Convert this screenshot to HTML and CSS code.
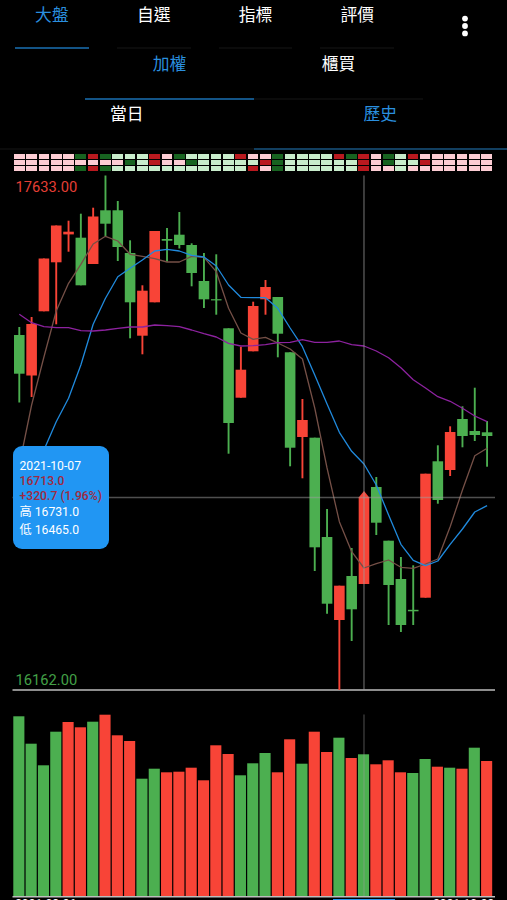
FILE: index.html
```html
<!DOCTYPE html>
<html lang="zh-TW">
<head>
    <meta charset="UTF-8">
    <title>大盤</title>
    <link rel="stylesheet" href="styles.css">
</head>
<body>
    <div class="app">
        <header class="topbar">
            <nav class="tabs tabs-main">
                <a class="tab active">大盤</a>
                <a class="tab">自選</a>
                <a class="tab">指標</a>
                <a class="tab">評價</a>
            </nav>
            <svg class="more" width="8" height="24" viewBox="0 0 8 24">
                <circle cx="4" cy="4.6" r="2.9"/>
                <circle cx="4" cy="12" r="2.9"/>
                <circle cx="4" cy="19.4" r="2.9"/>
            </svg>
        </header>
        <nav class="tabs tabs-market">
            <a class="tab active">加權</a>
            <a class="tab">櫃買</a>
        </nav>
        <nav class="tabs tabs-range">
            <a class="tab">當日</a>
            <a class="tab active">歷史</a>
        </nav>

        <div class="signals" id="signals"></div>

        <div class="price">
            <svg class="chart" id="price" width="507" height="520" viewBox="0 171 507 520"></svg>
            <div class="tooltip">
                <div>2021-10-07</div>
                <div class="up">16713.0</div>
                <div class="up">+320.7 (1.96%)</div>
                <div class="range">高 16731.0</div>
                <div class="range">低 16465.0</div>
            </div>
        </div>
        <svg class="chart" id="volume" width="507" height="207" viewBox="0 691 507 207"></svg>
        <footer class="dates">
            <span>2021-08-26</span>
            <div class="handle"></div>
            <span>2021-10-22</span>
        </footer>
    </div>
    <script src="chart.js"></script>
</body>
</html>
```
FILE: styles.css
```css
body {
    margin: 0;
    background: #000;
    overflow: hidden;
    font-family: Roboto, "Noto Sans CJK TC", sans-serif;
    color: #fff;
}

.app {
    width: 507px;
    height: 900px;
    overflow: hidden;
    display: flex;
    flex-direction: column;
}

/* tabs */
.topbar {
    display: flex;
    height: 49px;
    flex-shrink: 0;
}

.tabs {
    display: flex;
    flex-shrink: 0;
}

.tab {
    box-sizing: border-box;
    text-align: center;
    font-size: 16.8px;
    line-height: 30px;
    border-bottom: 2px solid #0b0b0b;
}

.tab.active {
    color: #2a8fdf;
    border-bottom-color: #135486;
}

.tabs-main {
    gap: 28px;
    padding-left: 15px;
    width: 442px;
}

.tabs-main .tab {
    width: 73.8px;
    height: 49px;
}

.more {
    margin: 14px 0 0 4px;
    fill: #fff;
}

.tabs-market {
    height: 51px;
    padding: 0 84px 0 85px;
}

.tabs-market .tab,
.tabs-range .tab {
    flex: 1;
}

.tabs-range {
    height: 50px;
}

.tabs-range .tab {
    line-height: 29px;
}

.tabs-range .tab.active {
    border-bottom-color: #123f60;
}

/* signal strip */
.signals {
    display: grid;
    grid-template-columns: repeat(39, 10.7px);
    grid-template-rows: repeat(3, 5px);
    grid-auto-flow: column;
    gap: 1px 1.61px;
    padding: 3.5px 0 0 14px;
    height: 17.5px;
    flex-shrink: 0;
}

.P { background: #fcccd3; }
.L { background: #c8eccb; }
.R { background: #b9191f; }
.G { background: #176320; }

/* charts */
.chart {
    display: block;
    flex-shrink: 0;
}

.price {
    position: relative;
    flex-shrink: 0;
}

.bull {
    fill: #f84437;
    stroke: #f84437;
}

.bear {
    fill: #4caf50;
    stroke: #4caf50;
}

.body {
    stroke: none;
}

.wick {
    stroke-width: 1.9;
}

.ma {
    fill: none;
    stroke-width: 1.3;
    stroke-linejoin: round;
}

.ma5 { stroke: #755047; }
.ma10 { stroke: #208add; }
.ma20 { stroke: #8d229f; }

.axis {
    stroke: #bdbdbd;
    stroke-width: 1.5;
}

.cross {
    stroke: #9e9e9e;
    stroke-opacity: 0.5;
    stroke-width: 1.5;
}

.volume-cross {
    stroke: #9e9e9e;
    stroke-opacity: 0.3;
    stroke-width: 1.7;
}

.limit {
    font-size: 14.7px;
}

.high { fill: #e53f35; }
.low { fill: #43a047; }

.tooltip {
    position: absolute;
    left: 13px;
    top: 275px;
    box-sizing: border-box;
    width: 96px;
    height: 103px;
    padding: 13px 0 0 6.5px;
    border-radius: 9px;
    background: #2196f3;
    font-size: 12.2px;
    line-height: 15px;
    white-space: nowrap;
}

.tooltip .up {
    color: #a02a40;
    font-weight: 500;
}

.tooltip .range {
    line-height: 17.5px;
}

/* bottom dates */
.dates {
    display: flex;
    align-items: flex-start;
    padding: 0 13px 0 15px;
    font-size: 12.1px;
    line-height: 14px;
    flex-shrink: 0;
}

.dates span {
    margin-top: -1px;
}

.handle {
    width: 62px;
    height: 4px;
    margin: 1px 38px 0 auto;
    background: #2196f3;
}
```
FILE: chart.js
```js
const STEP = 12.31;
const FIRST = 19.3;
const x = i => FIRST + STEP * i;

// one column per day, three signals each
const signals = 'PPP PPP PPP PPP PPP GPG RPR GPG LPL LGL LLL RRL PPL GPL LGL LLL LLL LLL RLL PLR ' +
    'PRP GGG LLL LLL LLL LLL RLL GLL RRR PPP GGP LLL RLP PRP PPP PPP PPP PPP PPP';

// color, wick top, body top, body bottom, wick bottom
const candles = [
    ['g', 327, 335, 373.7, 402.5], ['r', 317, 324, 375.5, 397], ['r', 258.5, 258.5, 311.3, 311.3],
    ['r', 225.5, 225.5, 262.3, 324.3], ['r', 220.7, 231.7, 234.4, 251.7], ['g', 213.7, 237.7, 285.3, 285.3],
    ['r', 207.7, 216.5, 264, 264], ['g', 175.5, 210.3, 223.7, 236], ['g', 201, 210.3, 247, 261],
    ['g', 240.3, 253, 302.3, 338.3], ['r', 285.3, 290.7, 335.7, 354.3], ['r', 231, 231, 302.3, 302.3],
    ['g', 228, 239, 240.7, 261.7], ['g', 212, 234.7, 245, 248.5], ['g', 243.3, 245, 273, 286.3],
    ['g', 253, 281, 299.3, 308], ['g', 254.3, 299.2, 300.4, 314.7], ['g', 328.3, 328.3, 423, 453.7],
    ['r', 346.7, 369.7, 397.7, 397.7], ['r', 301.7, 306, 351.3, 351.3], ['r', 280, 287, 299.3, 314.7],
    ['g', 297, 297, 333.7, 357.3], ['g', 352.3, 352.3, 447.7, 466.3], ['r', 399, 420, 437, 478.3],
    ['g', 437.7, 437.7, 547.3, 571], ['g', 509, 537, 603.7, 613.7], ['r', 585.7, 585.7, 620, 690],
    ['g', 548, 576, 609.3, 641], ['r', 497, 497, 584, 584], ['g', 477, 487, 522.7, 535],
    ['g', 540.7, 540.7, 585, 625], ['g', 557, 579, 625, 632], ['g', 565.3, 609.8, 611.3, 625],
    ['r', 473.7, 473.7, 597.7, 597.7], ['g', 445.3, 461.3, 500, 503.7], ['r', 426.3, 432, 470, 476],
    ['g', 406.3, 419, 436, 447.3], ['g', 387.7, 431, 435, 441], ['g', 421, 432.3, 436, 466.7]
];

const ma5 = [465, 405, 357, 311, 283.3, 264.3, 244, 236.3, 241, 254.3, 256.3, 258.7, 262, 262, 256.3, 257.3,
    271.7, 308.3, 333, 339.3, 337.3, 343, 349, 359, 408, 468, 521.7, 551.7, 568, 563.7, 560, 567.3, 568.3,
    564, 559, 526.7, 490, 455.7, 448.3];
const ma10 = [510, 480, 450, 421.7, 398.3, 365, 324.3, 298.3, 276.7, 268.3, 260, 251, 249.3, 251, 255.3, 257,
    266, 285, 297.3, 297.7, 297.7, 308.3, 328, 346.7, 375, 404, 432.3, 451.3, 464, 485, 515, 544.3, 560.3,
    565.7, 561, 544.3, 529, 512, 505.7];
const ma20 = [314.3, 322.7, 326.7, 327.7, 327.7, 330.7, 331, 330, 328.3, 327, 327, 325, 325.7, 326.7, 330,
    333.7, 337, 343.3, 346, 345.7, 344.7, 342.7, 342.3, 339.7, 342.3, 342.3, 341, 344.7, 346, 351, 357.7,
    367.7, 379.7, 388, 396.7, 401.3, 408.3, 416, 421.7];

const volumeColors = 'ggggrrgrrrggrrrrrrgggrrgrrgrgrrrggrgrgr';
const volumes = [716.3, 743.7, 765.3, 731.7, 722, 727.3, 721.7, 714.7, 735.3, 741, 778.7, 768.7, 772.3, 771.7,
    767.7, 780.3, 745.3, 754, 775.3, 763.3, 753, 772.3, 739.3, 763.7, 731.7, 752, 737.7, 758, 754.3, 764.3,
    760.3, 772.3, 773, 759, 766.7, 767.7, 768.7, 747.7, 761];

const selected = 28;
const cls = c => c === 'r' ? 'bull' : 'bear';
const line = (name, x1, y1, x2, y2) => `<line class="${name}" x1="${x1}" y1="${y1}" x2="${x2}" y2="${y2}"/>`;
const average = (name, data) => `<polyline class="ma ${name}" points="${data.map((y, i) => x(i) + ',' + y).join(' ')}"/>`;

document.getElementById('signals').innerHTML =
    signals.replace(/ /g, '').split('').map(s => `<i class="${s}"></i>`).join('');

// price
let price = line('axis', 12.5, 690, 495, 690);
candles.forEach(([c, high, top, bottom, low], i) => {
    price += line('wick ' + cls(c), x(i), high, x(i), low);
    price += `<rect class="body ${cls(c)}" x="${x(i) - 5.3}" y="${top}" width="10.6" height="${bottom - top}"/>`;
});
const sx = x(selected);
price += `<path class="body bull" d="M${sx} 491l5.3 6.5h-10.6z"/>`;
price += average('ma5', ma5) + average('ma10', ma10) + average('ma20', ma20);
price += line('cross', sx, 175.5, sx, 690) + line('cross', 12.5, 497.4, 495, 497.4);
price += '<text class="limit high" x="15.5" y="191.7">17633.00</text>';
price += '<text class="limit low" x="15.5" y="685.3">16162.00</text>';
document.getElementById('price').innerHTML = price;

// volume
let volume = '';
volumes.forEach((y, i) => {
    volume += `<rect class="body ${cls(volumeColors[i])}" x="${x(i) - 6}" y="${y}" width="11.1" height="${896 - y}"/>`;
});
volume += line('volume-cross', sx, 714.5, sx, 896) + line('axis', 12.5, 896.7, 495, 896.7);
document.getElementById('volume').innerHTML = volume;
```
